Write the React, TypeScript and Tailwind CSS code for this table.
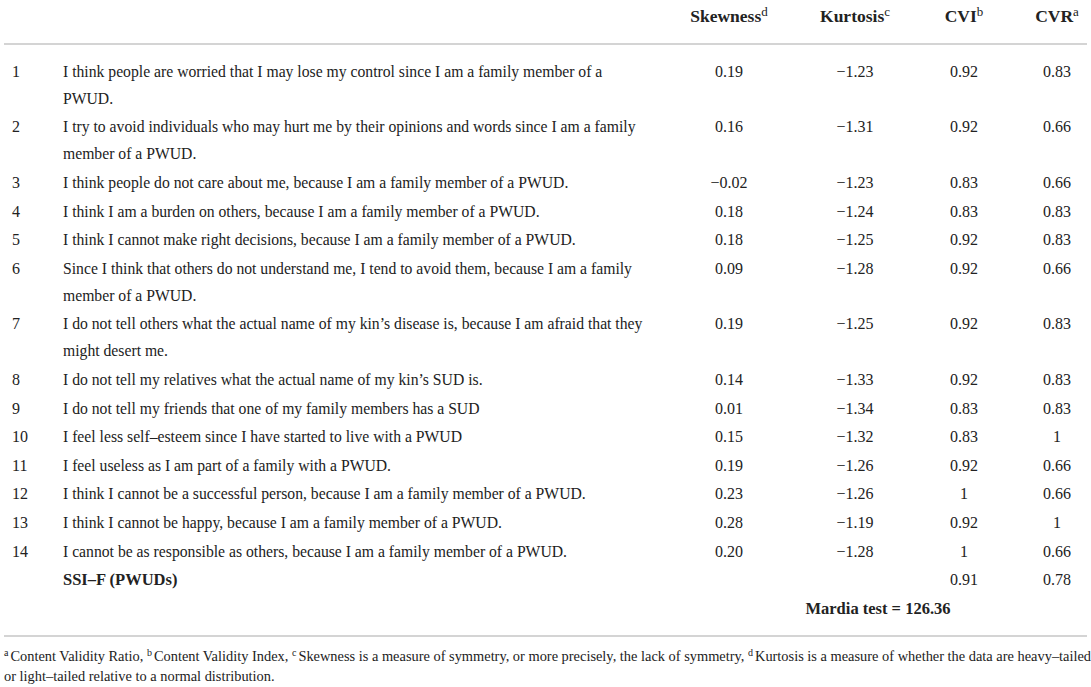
import React from 'react';

type Row = {
  n: string;
  text: React.ReactNode;
  skew: string;
  kurt: string;
  cvi: string;
  cvr: string;
};

const rows: Row[] = [
  { n: '1', text: <>I think people are worried that I may lose my control since I am a family member of a<br />PWUD.</>, skew: '0.19', kurt: '\u22121.23', cvi: '0.92', cvr: '0.83' },
  { n: '2', text: <>I try to avoid individuals who may hurt me by their opinions and words since I am a family<br />member of a PWUD.</>, skew: '0.16', kurt: '\u22121.31', cvi: '0.92', cvr: '0.66' },
  { n: '3', text: 'I think people do not care about me, because I am a family member of a PWUD.', skew: '\u22120.02', kurt: '\u22121.23', cvi: '0.83', cvr: '0.66' },
  { n: '4', text: 'I think I am a burden on others, because I am a family member of a PWUD.', skew: '0.18', kurt: '\u22121.24', cvi: '0.83', cvr: '0.83' },
  { n: '5', text: 'I think I cannot make right decisions, because I am a family member of a PWUD.', skew: '0.18', kurt: '\u22121.25', cvi: '0.92', cvr: '0.83' },
  { n: '6', text: <>Since I think that others do not understand me, I tend to avoid them, because I am a family<br />member of a PWUD.</>, skew: '0.09', kurt: '\u22121.28', cvi: '0.92', cvr: '0.66' },
  { n: '7', text: <>I do not tell others what the actual name of my kin’s disease is, because I am afraid that they<br />might desert me.</>, skew: '0.19', kurt: '\u22121.25', cvi: '0.92', cvr: '0.83' },
  { n: '8', text: 'I do not tell my relatives what the actual name of my kin’s SUD is.', skew: '0.14', kurt: '\u22121.33', cvi: '0.92', cvr: '0.83' },
  { n: '9', text: 'I do not tell my friends that one of my family members has a SUD', skew: '0.01', kurt: '\u22121.34', cvi: '0.83', cvr: '0.83' },
  { n: '10', text: 'I feel less self\u2013esteem since I have started to live with a PWUD', skew: '0.15', kurt: '\u22121.32', cvi: '0.83', cvr: '1' },
  { n: '11', text: 'I feel useless as I am part of a family with a PWUD.', skew: '0.19', kurt: '\u22121.26', cvi: '0.92', cvr: '0.66' },
  { n: '12', text: 'I think I cannot be a successful person, because I am a family member of a PWUD.', skew: '0.23', kurt: '\u22121.26', cvi: '1', cvr: '0.66' },
  { n: '13', text: 'I think I cannot be happy, because I am a family member of a PWUD.', skew: '0.28', kurt: '\u22121.19', cvi: '0.92', cvr: '1' },
  { n: '14', text: 'I cannot be as responsible as others, because I am a family member of a PWUD.', skew: '0.20', kurt: '\u22121.28', cvi: '1', cvr: '0.66' },
];

// header superscript
const HSup = ({ children }: { children: React.ReactNode }) => (
  <sup className="text-[13px] font-normal -top-[6px]">{children}</sup>
);

// footnote superscript
const FSup = ({ children }: { children: React.ReactNode }) => (
  <sup className="text-[10px] -top-[5px] mr-[2px]">{children}</sup>
);

const App: React.FC = () => {
  return (
    <div className="w-[1091px] h-[687px] bg-white text-[#222] px-1 font-['Liberation_Serif',serif]">
      <table className="w-[1083px] table-fixed border-collapse">
        <colgroup>
          <col className="w-[59px]" />
          <col className="w-[586px]" />
          <col className="w-[160px]" />
          <col className="w-[92px]" />
          <col className="w-[126px]" />
          <col className="w-[60px]" />
        </colgroup>
        <thead>
          <tr className="border-b-2 border-[#d4d4d4] text-[17.5px] leading-[20px] font-bold align-top">
            <th className="h-[44px]" />
            <th />
            <th className="text-center pt-[6px] whitespace-nowrap">Skewness<HSup>d</HSup></th>
            <th className="text-center pt-[6px] whitespace-nowrap">Kurtosis<HSup>c</HSup></th>
            <th className="text-center pt-[6px] whitespace-nowrap">CVI<HSup>b</HSup></th>
            <th className="text-center pt-[6px] whitespace-nowrap">CVR<HSup>a</HSup></th>
          </tr>
        </thead>
        <tbody className="text-[16px] leading-[27px] align-top">
          <tr><td colSpan={6} className="h-[13px] p-0" /></tr>
          {rows.map((r) => (
            <tr key={r.n}>
              <td className="pl-2 py-[0.8px]">{r.n}</td>
              <td className="py-[0.8px] text-[15.7px] whitespace-nowrap">{r.text}</td>
              <td className="py-[0.8px] text-center">{r.skew}</td>
              <td className="py-[0.8px] text-center">{r.kurt}</td>
              <td className="py-[0.8px] text-center">{r.cvi}</td>
              <td className="py-[0.8px] text-center">{r.cvr}</td>
            </tr>
          ))}
          <tr>
            <td className="py-[0.8px]" />
            <td className="py-[0.8px] font-bold text-[16.5px]">SSI{'\u2013'}F (PWUDs)</td>
            <td />
            <td />
            <td className="py-[0.8px] text-center">0.91</td>
            <td className="py-[0.8px] text-center">0.78</td>
          </tr>
          <tr>
            <td className="py-[0.8px]" />
            <td />
            <td colSpan={4} className="py-[0.8px] pl-[20px] text-center font-bold text-[16.5px]">Mardia test = 126.36</td>
          </tr>
          <tr className="border-b-2 border-[#d4d4d4]"><td colSpan={6} className="h-[13px] p-0" /></tr>
        </tbody>
      </table>
      <p className="text-[14.4px] leading-[20px] mt-[9px] whitespace-nowrap">
        <FSup>a</FSup>Content Validity Ratio, <FSup>b</FSup>Content Validity Index, <FSup>c</FSup>Skewness is a measure of symmetry, or more precisely, the lack of symmetry, <FSup>d</FSup>Kurtosis is a measure of whether the data are heavy{'\u2013'}tailed<br />or light{'\u2013'}tailed relative to a normal distribution.
      </p>
    </div>
  );
};

export default App;
